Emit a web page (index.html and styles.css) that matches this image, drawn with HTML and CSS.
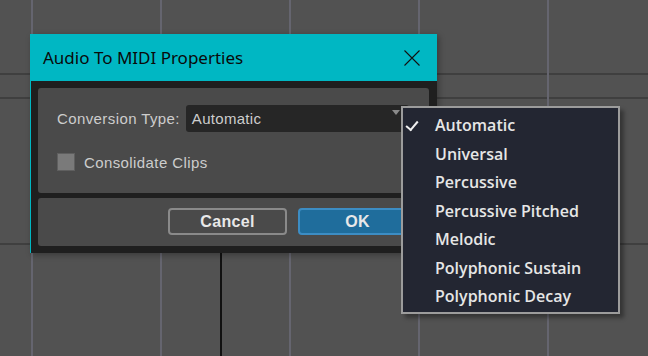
FILE: index.html
```html
<!DOCTYPE html>
<html lang="en">
<head>
  <meta charset="UTF-8">
  <title>Audio To MIDI Properties</title>
  <link rel="stylesheet" href="styles.css">
</head>
<body>
  <div class="canvas">
    <!-- grade das trilhas -->
    <div class="hline" style="top: 73px"></div>
    <div class="hline" style="top: 97px"></div>
    <div class="hline" style="top: 243px"></div>
    <div class="vline" style="left: 31px"></div>
    <div class="vline" style="left: 160px"></div>
    <div class="vline" style="left: 289px"></div>
    <div class="vline" style="left: 418px"></div>
    <div class="vline" style="left: 547px"></div>
    <div class="playhead"></div>

    <div class="dialog">
      <div class="titlebar">
        <span class="title">Audio To MIDI Properties</span>
        <svg class="close" width="16" height="16" viewBox="0 0 16 16">
          <path d="M0.5 0.5 L15.5 15.5 M15.5 0.5 L0.5 15.5" stroke="#111" stroke-width="1.1" fill="none"/>
        </svg>
      </div>
      <div class="dialog-body">
        <div class="panel panel-top">
          <div class="row">
            <span class="label">Conversion Type:</span>
            <div class="combo">
              <span>Automatic</span>
              <span class="arrow"></span>
            </div>
          </div>
          <div class="row check-row">
            <span class="checkbox"></span>
            <span class="label">Consolidate Clips</span>
          </div>
        </div>
        <div class="panel panel-buttons">
          <button class="btn btn-cancel">Cancel</button>
          <button class="btn btn-ok">OK</button>
        </div>
      </div>
    </div>

    <ul class="menu">
      <li class="checked">Automatic</li>
      <li>Universal</li>
      <li>Percussive</li>
      <li>Percussive Pitched</li>
      <li>Melodic</li>
      <li>Polyphonic Sustain</li>
      <li>Polyphonic Decay</li>
    </ul>
  </div>
</body>
</html>
```

FILE: styles.css
```css
:root {
  --fundo: #525252;
  --ciano: #00b7c3;
  --escuro: #1f1f1f;
  --painel: #4a4a4a;
  --texto: #cdcdcd;
  --menu: #232632;
}

* {
  box-sizing: border-box;
}

body {
  margin: 0;
  background-color: var(--fundo);
  font-family: "Liberation Sans", Arial, sans-serif;
  overflow: hidden;
}

.canvas {
  position: relative;
  width: 648px;
  height: 356px;
}

.hline {
  position: absolute;
  left: 0;
  right: 0;
  height: 2px;
  background-color: #3f3f3f;
}

.vline {
  position: absolute;
  top: 0;
  bottom: 0;
  width: 2px;
  background-color: #65656f;
}

.playhead {
  position: absolute;
  left: 220px;
  top: 120px;
  bottom: 0;
  width: 2px;
  background-color: #111;
}

/* Janela */
.dialog {
  position: absolute;
  left: 30px;
  top: 34px;
  width: 407px;
  height: 219px;
  display: flex;
  flex-direction: column;
  border-left: 1px solid var(--ciano);
  box-shadow: 2px 2px 6px rgba(0,0,0,0.3);
}

.titlebar {
  height: 47px;
  background-color: var(--ciano);
  display: flex;
  align-items: center;
  justify-content: space-between;
  padding: 0 17px 0 12px;
}

.title {
  font-family: "Noto Sans", sans-serif;
  font-size: 17px;
  color: #0a0a0a;
  margin-top: -1px;
}

.close {
  display: block;
}

.dialog-body {
  flex: 1;
  background-color: var(--escuro);
  padding: 7px 8px 7px 7px;
  display: flex;
  flex-direction: column;
  gap: 5px;
}

.panel {
  background-color: var(--painel);
  border-radius: 3px;
}

.panel-top {
  height: 105px;
  padding: 17px 19px 0 19px;
}

.row {
  display: flex;
  align-items: center;
}

.label {
  font-size: 15px;
  color: var(--texto);
  letter-spacing: 0.4px;
}

.combo {
  margin-left: 6px;
  width: 223px;
  height: 27px;
  background-color: #262626;
  border-radius: 3px;
  display: flex;
  align-items: center;
  justify-content: space-between;
  padding: 0 9px 0 6px;
  font-size: 15px;
  color: var(--texto);
  letter-spacing: 0.3px;
}

.arrow {
  width: 0;
  height: 0;
  border-left: 4px solid transparent;
  border-right: 4px solid transparent;
  border-top: 5px solid #8a8a8a;
  margin-top: -12px;
}

.check-row {
  margin-top: 21px;
  gap: 9px;
}

.checkbox {
  width: 18px;
  height: 18px;
  background-color: #7a7a7a;
  border: 1px solid #5f5f5f;
}

.panel-buttons {
  flex: 1;
  display: flex;
  justify-content: flex-end;
  align-items: center;
  gap: 11px;
  padding: 0 12px 1px 0;
}

.btn {
  width: 119px;
  height: 27px;
  border-radius: 4px;
  font-family: "Liberation Sans", Arial, sans-serif;
  font-size: 16px;
  font-weight: bold;
  color: #e8e8e8;
  padding: 0;
  letter-spacing: 0.3px;
}

.btn-cancel {
  background-color: var(--painel);
  border: 2px solid #8a8a8a;
}

.btn-ok {
  background-color: #1f6d9c;
  border: 2px solid #3c8dc4;
}

/* Menu suspenso */
.menu {
  position: absolute;
  left: 401px;
  top: 106px;
  width: 219px;
  height: 208px;
  margin: 0;
  padding: 4px 0 0 0;
  list-style: none;
  background-color: var(--menu);
  border: 2px solid #9c9c9c;
  box-shadow: 4px 4px 4px rgba(0,0,0,0.35);
}

.menu li {
  height: 28.5px;
  line-height: 27px;
  padding-left: 32px;
  font-family: "Open Sans", sans-serif;
  font-weight: 600;
  font-size: 16px;
  color: #e6e6e6;
  position: relative;
}

.menu li.checked::before {
  content: "";
  position: absolute;
  left: 3px;
  top: 9px;
  width: 10px;
  height: 5px;
  border-left: 2px solid #f0f0f0;
  border-bottom: 2px solid #f0f0f0;
  transform: rotate(-50deg);
}
```
